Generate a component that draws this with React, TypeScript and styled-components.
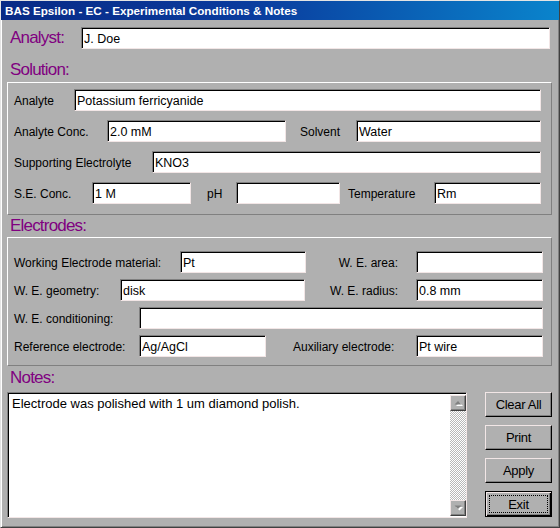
import React from "react";
import styled, { createGlobalStyle, css } from "styled-components";

const GlobalStyle = createGlobalStyle`
  html, body { margin: 0; padding: 0; background: #b0b0b0; }
  * { box-sizing: border-box; }
  body { font-family: "Liberation Sans", Arial, sans-serif; }
`;

const LIGHT = "#f2e6e6";

const Window = styled.div`
  width: 560px;
  height: 528px;
  background: #b0b0b0;
  border: 1px solid;
  border-color: #e4e4e4 #404040 #404040 #e4e4e4;
  box-shadow: inset 1px 1px #ffffff, inset -1px -1px #808080;
  display: flex;
  flex-direction: column;
`;

const TitleBar = styled.div`
  height: 19px;
  line-height: 19px;
  padding-left: 4px;
  background: linear-gradient(90deg, #082a86 0%, #0a3c9e 45%, #0a84cc 100%);
  color: #ffffff;
  font-weight: bold;
  font-size: 11.7px;
  white-space: nowrap;
`;

const Body = styled.div`
  display: flex;
  flex-direction: column;
  padding: 0 7px 0 6px;
`;

const AnalystRow = styled.div`
  display: flex;
  align-items: center;
  height: 22px;
  margin-top: 7px;
`;

const BigLabel = styled.span<{ $w?: number }>`
  ${(p) => p.$w && css`width: ${p.$w}px; flex-shrink: 0;`}
  padding-left: 3px;
  font-size: 17px;
  letter-spacing: -0.8px;
  color: #800080;
  white-space: nowrap;
`;

const SectionTitle = styled(BigLabel)<{ $mt: number; $mb: number }>`
  display: block;
  height: 20px;
  line-height: 22px;
  margin-top: ${(p) => p.$mt}px;
  margin-bottom: ${(p) => p.$mb}px;
`;

const GroupBox = styled.div<{ $pt: number; $pr: number; $pb: number; $gap: number }>`
  display: flex;
  flex-direction: column;
  gap: ${(p) => p.$gap}px;
  border: 1px solid;
  border-color: #ffffff #808080 #808080 #ffffff;
  padding: ${(p) => `${p.$pt}px ${p.$pr}px ${p.$pb}px 6px`};
`;

const Row = styled.div`
  display: flex;
  align-items: center;
  height: 22px;
`;

const Label = styled.span<{ $w?: number; $ml?: number; $right?: boolean; $grow?: boolean }>`
  font-size: 12px;
  color: #000;
  white-space: nowrap;
  flex-shrink: 0;
  padding-top: 1px;
  ${(p) => p.$w !== undefined && css`width: ${p.$w}px;`}
  ${(p) => p.$ml !== undefined && css`margin-left: ${p.$ml}px;`}
  ${(p) => p.$grow && css`flex: 1;`}
  ${(p) => p.$right && css`text-align: right; padding-right: 18px;`}
`;

const TextBox = styled.input<{ $w?: number }>`
  height: 22px;
  ${(p) => (p.$w !== undefined ? css`width: ${p.$w}px; flex-shrink: 0;` : css`flex: 1; min-width: 0;`)}
  border: 1px solid;
  border-color: #808080 ${LIGHT} ${LIGHT} #808080;
  box-shadow: inset 1px 1px #000000;
  background: #ffffff;
  padding: 1px 1px 0 2px;
  font-family: "Liberation Sans", Arial, sans-serif;
  font-size: 12.5px;
  color: #000;
  outline: none;
  margin: 0;
`;

const NotesRow = styled.div`
  display: flex;
  height: 126px;
  gap: 18px;
`;

const NotesFrame = styled.div`
  width: 460px;
  display: flex;
  border: 1px solid;
  border-color: #808080 ${LIGHT} ${LIGHT} #808080;
  box-shadow: inset 1px 1px #000000;
  background: #ffffff;
  padding: 1px 0 0 1px;
`;

const NotesText = styled.textarea`
  flex: 1;
  border: none;
  resize: none;
  outline: none;
  overflow: hidden;
  background: #ffffff;
  font-family: "Liberation Sans", Arial, sans-serif;
  font-size: 13px;
  line-height: 15px;
  color: #000;
  padding: 2px 3px;
  margin: 0;
`;

const ScrollBar = styled.div`
  width: 16px;
  display: flex;
  flex-direction: column;
  padding: 1px 0;
`;

const Track = styled.div`
  flex: 1;
  background: repeating-conic-gradient(#ffffff 0 25%, #b8b8b8 0 50%) 0 0 / 2px 2px;
`;

const ArrowButton = styled.div`
  width: 16px;
  height: 16px;
  background: #b0b0b0;
  border: 1px solid;
  border-color: ${LIGHT} #404040 #404040 ${LIGHT};
  box-shadow: inset -1px -1px #808080;
  display: flex;
  align-items: center;
  justify-content: center;
`;

const ButtonCol = styled.div`
  width: 67px;
  display: flex;
  flex-direction: column;
  gap: 8px;
`;

const Button = styled.button<{ $default?: boolean }>`
  height: 25px;
  width: 67px;
  margin: 0;
  background: #b0b0b0;
  border: 1px solid;
  border-color: ${LIGHT} #000000 #000000 ${LIGHT};
  box-shadow: inset -1px -1px #808080;
  font-family: "Liberation Sans", Arial, sans-serif;
  font-size: 13px;
  letter-spacing: -0.3px;
  color: #000;
  display: flex;
  padding: 3px;
  ${(p) =>
    p.$default &&
    css`
      height: 26px;
      border-color: #000000;
      box-shadow: inset 1px 1px ${LIGHT}, inset -1px -1px #000000, inset -2px -2px #808080;
    `}
`;

const ButtonLabel = styled.span<{ $focus?: boolean }>`
  flex: 1;
  display: flex;
  align-items: center;
  justify-content: center;
  border: 1px solid transparent;
  ${(p) => p.$focus && css`border: 1px dotted #000000;`}
`;

const Arrow = ({ up }: { up?: boolean }) => (
  <svg width="9" height="6" viewBox="0 0 9 6">
    {up ? (
      <>
        <polygon points="1,5 8,5 4.5,1.5" fill="#ffffff" transform="translate(1,1)" />
        <polygon points="0.5,4.5 7.5,4.5 4,1" fill="#808080" />
      </>
    ) : (
      <>
        <polygon points="1,1 8,1 4.5,4.5" fill="#ffffff" transform="translate(1,1)" />
        <polygon points="0.5,0.5 7.5,0.5 4,4" fill="#808080" />
      </>
    )}
  </svg>
);

export default function App() {
  return (
    <>
      <GlobalStyle />
      <Window>
        <TitleBar>BAS Epsilon - EC - Experimental Conditions &amp; Notes</TitleBar>
        <Body>
          <AnalystRow>
            <BigLabel $w={74}>Analyst:</BigLabel>
            <TextBox $w={469} defaultValue="J. Doe" />
          </AnalystRow>

          <SectionTitle $mt={10} $mb={3}>Solution:</SectionTitle>
          <GroupBox $pt={6} $pr={10} $pb={10} $gap={9}>
            <Row>
              <Label $w={60}>Analyte</Label>
              <TextBox defaultValue="Potassium ferricyanide" />
            </Row>
            <Row>
              <Label $w={93}>Analyte Conc.</Label>
              <TextBox $w={179} defaultValue="2.0 mM" />
              <Label $w={56} $ml={14}>Solvent</Label>
              <TextBox defaultValue="Water" />
            </Row>
            <Row>
              <Label $w={138}>Supporting Electrolyte</Label>
              <TextBox defaultValue="KNO3" />
            </Row>
            <Row>
              <Label $w={78}>S.E. Conc.</Label>
              <TextBox $w={99} defaultValue="1 M" />
              <Label $w={29} $ml={16}>pH</Label>
              <TextBox $w={104} defaultValue="" />
              <Label $w={86} $ml={8}>Temperature</Label>
              <TextBox defaultValue="Rm" />
            </Row>
          </GroupBox>

          <SectionTitle $mt={0} $mb={2}>Electrodes:</SectionTitle>
          <GroupBox $pt={13} $pr={8} $pb={8} $gap={6}>
            <Row>
              <Label $w={166}>Working Electrode material:</Label>
              <TextBox $w={126} defaultValue="Pt" />
              <Label $grow $right>W. E. area:</Label>
              <TextBox $w={127} defaultValue="" />
            </Row>
            <Row>
              <Label $w={106}>W. E. geometry:</Label>
              <TextBox $w={185} defaultValue="disk" />
              <Label $grow $right>W. E. radius:</Label>
              <TextBox $w={127} defaultValue="0.8 mm" />
            </Row>
            <Row>
              <Label $w={125}>W. E. conditioning:</Label>
              <TextBox defaultValue="" />
            </Row>
            <Row>
              <Label $w={125}>Reference electrode:</Label>
              <TextBox $w={127} defaultValue="Ag/AgCl" />
              <Label $grow $ml={27}>Auxiliary electrode:</Label>
              <TextBox $w={127} defaultValue="Pt wire" />
            </Row>
          </GroupBox>

          <SectionTitle $mt={1} $mb={5}>Notes:</SectionTitle>
          <NotesRow>
            <NotesFrame>
              <NotesText defaultValue="Electrode was polished with 1 um diamond polish." />
              <ScrollBar>
                <ArrowButton>
                  <Arrow up />
                </ArrowButton>
                <Track />
                <ArrowButton>
                  <Arrow />
                </ArrowButton>
              </ScrollBar>
            </NotesFrame>
            <ButtonCol>
              <Button>
                <ButtonLabel>Clear All</ButtonLabel>
              </Button>
              <Button>
                <ButtonLabel>Print</ButtonLabel>
              </Button>
              <Button>
                <ButtonLabel>Apply</ButtonLabel>
              </Button>
              <Button $default>
                <ButtonLabel $focus>Exit</ButtonLabel>
              </Button>
            </ButtonCol>
          </NotesRow>
        </Body>
      </Window>
    </>
  );
}
